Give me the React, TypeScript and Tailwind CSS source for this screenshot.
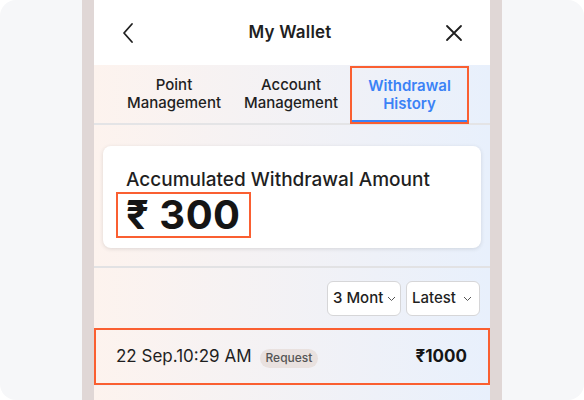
import React from 'react';

const font = { fontFamily: 'Inter, "Noto Sans", sans-serif' };

const tabs = [
  { label: ['Point', 'Management'], width: 'w-[116px]', active: false },
  { label: ['Account', 'Management'], width: 'w-[118px]', active: false },
  { label: ['Withdrawal', 'History'], width: 'w-[119px]', active: true },
];

const App = () => {
  return (
    <div className="w-[584px] h-[400px] bg-white overflow-hidden" style={font}>
      <div className="w-full h-full bg-[#f6f7f9] rounded-[16px] flex justify-center">
        {/* phone frame */}
        <div className="w-[420px] h-full bg-[#e0d7d6] px-[12px]">
          <div className="w-full h-full flex flex-col bg-gradient-to-r from-[#fdf3ee] to-[#e8f0fc]">
            {/* header */}
            <div className="h-[65px] bg-white flex items-center justify-between px-[27px] shrink-0">
              <svg width="14" height="22" viewBox="0 0 14 22" fill="none" stroke="#1f1f1f" strokeWidth="1.8" strokeLinecap="round" strokeLinejoin="round">
                <path d="M11 2 L3 11 L11 20" />
              </svg>
              <div className="text-[17px] font-semibold text-[#1f1f1f] tracking-[0.2px]">My Wallet</div>
              <svg width="18" height="18" viewBox="0 0 18 18" fill="none" stroke="#1f1f1f" strokeWidth="1.8" strokeLinecap="round">
                <path d="M2 2 L16 16 M16 2 L2 16" />
              </svg>
            </div>

            {/* tabs */}
            <div className="h-[60px] flex items-stretch pl-[22px] border-b-2 border-[#e4e4e6] shrink-0">
              {tabs.map((t, i) => (
                <div
                  key={i}
                  className={`${t.width} flex flex-col items-center justify-center leading-[18px] text-[15px] ${
                    t.active
                      ? 'text-[#3b82f6] font-semibold border-2 border-[#fa5f31] mt-[1px] mb-[-1px] shadow-[inset_0_-2px_0_#3b82f6]'
                      : 'text-[#1f1f1f] font-medium'
                  }`}
                >
                  <span>{t.label[0]}</span>
                  <span>{t.label[1]}</span>
                </div>
              ))}
            </div>

            {/* summary card */}
            <div className="h-[143px] px-[9px] pt-[21px] border-b-2 border-[#e2e2e4] shrink-0">
              <div className="h-[102px] bg-white rounded-[8px] shadow-[0_1px_4px_rgba(0,0,0,0.12)] pl-[23px] pt-[24px]">
                <div className="text-[19px] font-medium text-[#1f1f1f] leading-[20px]">Accumulated Withdrawal Amount</div>
                <div className="inline-flex border-2 border-[#fa5f31] mt-[2px] ml-[-10px] px-[8px] h-[46px] items-center">
                  <span className="text-[40px] font-bold text-[#151515] leading-none tracking-[0.5px]">₹ 300</span>
                </div>
              </div>
            </div>

            {/* filters */}
            <div className="flex justify-end gap-[5px] pr-[10px] pt-[13px] pb-[12px] shrink-0">
              <div className="w-[74px] h-[35px] bg-white border border-[#d6d6d8] rounded-[6px] flex items-center pl-[5px] pr-[4px] justify-between">
                <span className="text-[15px] font-medium text-[#1f1f1f]">3 Mont</span>
                <svg width="9" height="6" viewBox="0 0 9 6" fill="none" stroke="#555" strokeWidth="1">
                  <path d="M1 1 L4.5 4.5 L8 1" />
                </svg>
              </div>
              <div className="w-[74px] h-[35px] bg-white border border-[#d6d6d8] rounded-[6px] flex items-center pl-[5px] pr-[7px] justify-between">
                <span className="text-[15px] font-medium text-[#1f1f1f]">Latest</span>
                <svg width="9" height="6" viewBox="0 0 9 6" fill="none" stroke="#555" strokeWidth="1">
                  <path d="M1 1 L4.5 4.5 L8 1" />
                </svg>
              </div>
            </div>

            {/* row */}
            <div className="h-[57px] border-2 border-[#fa5f31] flex items-center pl-[20px] pr-[21px] shrink-0">
              <span className="text-[17px] text-[#1f1f1f]">22 Sep.10:29 AM</span>
              <span className="ml-[8px] mt-[3px] h-[19px] px-[6px] rounded-full bg-[#e9e1df] text-[12px] font-medium text-[#555] flex items-center">
                Request
              </span>
              <span className="ml-auto text-[17px] font-bold text-[#151515]">₹1000</span>
            </div>
            <div className="border-t border-[#f2f2f4]" />
          </div>
        </div>
      </div>
    </div>
  );
};

export default App;
